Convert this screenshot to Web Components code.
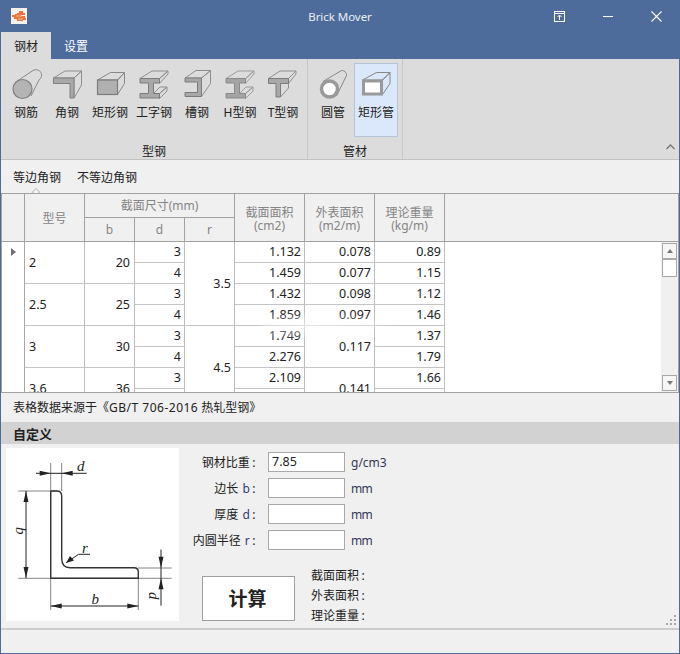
<!DOCTYPE html>
<html lang="zh"><head><meta charset="utf-8"><title>Brick Mover</title>
<style>
html,body{margin:0;padding:0;height:654px;width:680px;overflow:hidden}
body{font:12px "Noto Sans","Noto Sans CJK SC",sans-serif;color:#222}
bm-item svg{display:block}
bm-note span{letter-spacing:.5px}
</style></head><body>
<bm-app>
  <bm-titlebar slot="top" title-text="Brick Mover"></bm-titlebar>
  <bm-tabs slot="top"></bm-tabs>
  <bm-ribbon slot="top">
    <bm-group w="307" pad="4" label="型钢">
      <bm-item w="42" label="钢筋"><svg width="42" height="36" viewBox="5 66 42 36"><path d="M16.5 81.5 33 70.5a4.5 4.5 0 0 1 6 9.500L31 96" fill="#dcdcdc" stroke="#8a8a8a"/><circle cx="22.500" cy="89" r="9.500" fill="#b4b4b4" stroke="#808080" stroke-width="1.200"/></svg></bm-item>
      <bm-item w="40" label="角钢"><svg width="40" height="36" viewBox="47 66 40 36"><path d="M53.500 78 65 71h16.500L74 78zM74 78l7.500-7V85L74 98z" fill="#dcdcdc" stroke="#8f8f8f"/><path d="M53.500 78H74V98H70V83.500H53.500z" fill="#a8a8a8" stroke="#808080"/></svg></bm-item>
      <bm-item w="46" label="矩形钢"><svg width="46" height="36" viewBox="87 66 46 36"><path d="M97.500 80 110.500 72.500H124.500L117.500 80zM117.500 80l7-7.500V83.500L117.500 94.500z" fill="#dcdcdc" stroke="#888"/><rect x="97.500" y="80" width="20" height="14.500" fill="#b0b0b0" stroke="#7c7c7c" stroke-width="1.200"/></svg></bm-item>
      <bm-item w="42" label="工字钢"><svg width="42" height="36" viewBox="133 66 42 36"><path d="M140 78.500 152 71H168L159.500 78.500zM159.500 78.500 168 71V74L159.500 83.500zM153.500 93.500 160 87H167L159.500 93.500zM159.500 93.500 167 87V91L159.500 98.500z" fill="#dcdcdc" stroke="#8f8f8f"/><path d="M140 78.500H159.500V83H153.500V93.500H159.500V98H140V93.500H148.500V83H140z" fill="#a8a8a8" stroke="#7c7c7c"/></svg></bm-item>
      <bm-item w="44" label="槽钢"><svg width="44" height="36" viewBox="175 66 44 36"><path d="M185 78 196 70.500H210.500L201.500 78zM201.500 78 210.500 70.500V83.500L201.500 96.500z" fill="#dcdcdc" stroke="#8f8f8f"/><path d="M185 78H201.500V96.500H185V92.500H197.500V82H185z" fill="#a8a8a8" stroke="#7c7c7c"/></svg></bm-item>
      <bm-item w="42" label="H型钢"><svg width="42" height="36" viewBox="219 66 42 36"><path d="M226 78.500 238 71H254L245.500 78.500zM245.500 78.500 254 71V74L245.500 83.500zM239.500 93.500 246 87H253L245.500 93.500zM245.500 93.500 253 87V91L245.500 98.500z" fill="#dcdcdc" stroke="#9c9c9c"/><path d="M226 78.500H245.500V83H239.500V93.500H245.500V98H226V93.500H234.500V83H226z" fill="#a4a4a4" stroke="#8a8a8a"/></svg></bm-item>
      <bm-item w="44" label="T型钢"><svg width="44" height="36" viewBox="261 66 44 36"><path d="M268.500 78.500 280 71H296L288.500 78.500zM288.500 78.500 296 71V74L288.500 83.500zM280.500 83.500H288.500V88L280.500 97z" fill="#dcdcdc" stroke="#8f8f8f"/><path d="M268.500 78.500H288.500V83.500H280.500V97H276V83.500H268.500z" fill="#a8a8a8" stroke="#7c7c7c"/></svg></bm-item>
    </bm-group>
    <bm-group w="95" pad="5" gap="1" label="管材">
      <bm-item w="40" label="圆管"><svg width="40" height="36" viewBox="313 66 40 36"><path d="M323 81.500 341.500 70.500a4.500 4.500 0 0 1 5 5L336.500 96" fill="#dcdcdc" stroke="#8a8a8a"/><circle cx="329.500" cy="89" r="8" fill="#fff" stroke="#999" stroke-width="3.500"/></svg></bm-item>
      <bm-item w="44" active label="矩形管"><svg width="44" height="36" viewBox="354 66 44 36"><path d="M362.500 80 376.500 72.500H390L382.500 80zM382.500 80 390 72.500V83.500L382.500 94.500z" fill="none" stroke="#888"/><rect x="363.500" y="81" width="18" height="13" fill="#fff" stroke="#999" stroke-width="3"/></svg></bm-item>
    </bm-group>
  </bm-ribbon>
  <bm-subtabs slot="top"></bm-subtabs>
  <bm-grid slot="top"></bm-grid>
  <bm-note slot="top">表格数据来源于《<span>GB/T 706-2016</span> 热轧型钢》</bm-note>
  <bm-section slot="top">自定义</bm-section>
  <bm-custom slot="top"><bm-diagram></bm-diagram></bm-custom>
  <bm-status slot="top"></bm-status>
</bm-app>
<script>
function def(name, html, extra){
  class C extends HTMLElement{
    constructor(){super();this.attachShadow({mode:'open'}).innerHTML=typeof html==='function'?html(this):html;}
    connectedCallback(){extra&&extra(this);}
  }
  customElements.define(name,C);
}
def('bm-app',`<style>:host{display:flex;flex-direction:column;box-sizing:border-box;width:680px;height:654px;background:#f0f0f0;border:solid #4d6c9b;border-width:0 1px 1px 1px}::slotted(*){flex:none}</style><slot name="top"></slot>`);
def('bm-titlebar',`<style>
:host{display:flex;align-items:center;height:32px;margin:0 -1px;background:#4d6c9b;color:#e9eef6;font-size:11.500px;position:relative}
.logo{margin-left:11px;display:block}
.t{position:absolute;left:0;right:0;text-align:center;top:8px;line-height:17px;letter-spacing:-.05px}
.sp{flex:1}
.c{display:block}
</style>
<svg class="logo" width="16" height="16" viewBox="0 0 16 16"><rect width="16" height="16" fill="#f6f1ec"/><path d="M8 3h4v2h2v2H10v1h4v2h1v2H12v1H6v-2H3V9H1V7h3V6h2V5h2z" fill="#f0743a"/><path d="M5 8h6M7 11h5" stroke="#f8b48f"/></svg>
<div class="t">Brick Mover</div><div class="sp"></div>
<svg class="c" style="margin-right:38px" width="11" height="11" viewBox="0 0 11 11" fill="none" stroke="#fff"><rect x=".5" y=".5" width="10" height="10"/><path d="M0 2.500H11M5.500 9V4.500M3.500 6l2-2 2 2"/></svg>
<svg class="c" style="margin-right:38px" width="10" height="11" viewBox="0 0 10 11" stroke="#fff"><path d="M0 5.500H10"/></svg>
<svg class="c" style="margin-right:18px" width="11" height="11" viewBox="0 0 11 11" stroke="#fff" stroke-width="1.100"><path d="M.5.500l10 10M10.500.500l-10 10"/></svg>`);
def('bm-tabs',`<style>
:host{display:flex;height:27px;margin:0 -1px;background:#4d6c9b;padding-left:1px;line-height:29px;font-size:12px}
.a{width:50px;padding-left:13px;box-sizing:border-box;background:#dcdcdc;color:#222}
.b{margin-left:13px;color:#fff}
</style><div class="a">钢材</div><div class="b">设置</div>`);
def('bm-ribbon',`<style>
:host{display:flex;box-sizing:border-box;height:101px;background:#dcdcdc;border-bottom:1px solid #c2c2c2;position:relative}
svg{position:absolute;left:665px;top:85px}
</style><slot></slot><svg width="9" height="6" viewBox="0 0 9 6" fill="none" stroke="#777" stroke-width="1.300"><path d="M.5 5 4.500 1l4 4"/></svg>`);
def('bm-group',h=>`<style>
:host{display:flex;flex-direction:column;box-sizing:border-box;height:100px;border-right:1px solid #c6c6c6;width:${h.getAttribute('w')}px;padding-top:4px}
.r{display:flex;height:74px;padding-left:${h.getAttribute('pad')}px;gap:${h.getAttribute('gap')||0}px}
.l{height:16px;margin-top:7px;line-height:16px;text-align:center;color:#222}
</style><div class="r"><slot></slot></div><div class="l">${h.getAttribute('label')}</div>`);
def('bm-item',h=>`<style>
:host{display:block;box-sizing:border-box;height:74px;width:${h.getAttribute('w')}px;padding-top:3px;text-align:center;color:#222;${h.hasAttribute('active')?'background:#dbe7fb;box-shadow:inset 0 0 0 1px #b5c5d9;':''}}
.l{margin-top:3px;line-height:16px;white-space:nowrap}
</style><slot></slot><div class="l">${h.getAttribute('label')}</div>`);
def('bm-subtabs',`<style>
:host{display:flex;height:33px;padding-left:12px;gap:16px;line-height:36px;background:#f0f0f0;position:relative;color:#222}
i{position:absolute;left:31px;bottom:0;width:9px;height:5px;overflow:hidden}
i::after{content:"";position:absolute;left:1px;top:1px;width:6px;height:6px;background:#f4f4f4;border:1px solid #c4c4c4;box-sizing:border-box;transform:rotate(45deg)}
</style><span>等边角钢</span><span>不等边角钢</span><i></i>`);
const cols='23px 60px 50px 50px 50px 70px 70px 70px';
const data=[
 ['2','20',['3','4'],['1.132','1.459'],['0.078','0.077'],['0.89','1.15']],
 ['2.5','25',['3','4'],['1.432','1.859'],['0.098','0.097'],['1.12','1.46']],
 ['3','30',['3','4'],['1.749','2.276'],['0.117'],['1.37','1.79']],
 ['3.6','36',['3',''],['2.109',''],['0.141'],['1.66','']]
];
function bodyCells(){
  let s='<div class="c rh" style="grid-area:1/1/9/2"><i></i></div>';
  data.forEach((d,i)=>{
    const r=i*2+1;
    s+=`<div class="c l" style="grid-area:${r}/2/${r+2}/3">${d[0]}</div><div class="c n p4" style="grid-area:${r}/3/${r+2}/4">${d[1]}</div>`;
    d[2].forEach((v,j)=>s+=`<div class="c n" style="grid-area:${r+j}/4/${r+j+1}/5">${v}</div>`);
    [[3,6],[4,7],[5,8]].forEach(([k,col])=>{
      if(d[k].length==1) s+=`<div class="c n" style="grid-area:${r}/${col}/${r+2}/${col+1}">${d[k][0]}</div>`;
      else d[k].forEach((v,j)=>s+=`<div class="c n" style="grid-area:${r+j}/${col}/${r+j+1}/${col+1}">${v}</div>`);
    });
  });
  s+='<div class="c n" style="grid-area:1/5/5/6">3.5</div><div class="c n" style="grid-area:5/5/9/6">4.5</div>';
  return s;
}
def('bm-grid',`<style>
:host{display:flex;flex-direction:column;box-sizing:border-box;height:200px;border:1px solid #a2a2a2;background:#fff;margin-left:0;color:#222}
.h{display:grid;grid-template-columns:${cols} 1fr;grid-template-rows:24px 24px;background:#f0f0f0;color:#858585;flex:none}
.h div{box-sizing:border-box;border-right:1px solid #a2a2a2;border-bottom:1px solid #a2a2a2;display:flex;align-items:center;justify-content:center;text-align:center;line-height:14px}
.h .tall{padding-top:2px}
.h .two{padding-top:3px;flex-direction:column;font-size:12px}
.h .two b{display:block;font-weight:400;height:13px;line-height:13px}
.h .e{border-right:0}
.b{flex:1;display:flex;min-height:0;position:relative;overflow:hidden}
.t{flex:none;display:grid;grid-template-columns:${cols};grid-auto-rows:21px;height:168px;font-size:12.500px}
.c{box-sizing:border-box;border-right:1px solid #bdbdbd;border-bottom:1px solid #c4c4c4;display:flex;align-items:center;padding:0 3px 1px 4px;background:#fff}
.n{justify-content:flex-end}.p4{padding-right:4px}
.rh{align-items:flex-start;border-bottom:0;border-right-color:#a8a8a8;padding:0}
.rh i{display:block;margin:6px 0 0 9px;border:4px solid transparent;border-left:5px solid #707070;border-right:0}
.sp{flex:1}
.sb{flex:none;width:17px;margin-right:0;background:#f0f0f0;display:flex;flex-direction:column;padding:1px 0 1px 1px;box-sizing:border-box}
.sb div{box-sizing:border-box;width:15px;background:#fff;border:1px solid #a8a8a8;display:flex;align-items:center;justify-content:center}
.up{height:16px;background:#f6f6f6!important}.th{height:18px;margin-top:0}.gap{flex:1;border:0!important;background:none!important}.dn{height:16px;background:#f6f6f6!important}
.sb i{border:3.500px solid transparent}
.up i{border-bottom:4px solid #777;border-top:0}.dn i{border-top:4px solid #777;border-bottom:0}
.fade{position:absolute;left:261px;top:70px;width:130px;height:28px;background:radial-gradient(ellipse at 40% 50%,rgba(255,255,255,.55),rgba(255,255,255,.3) 45%,rgba(255,255,255,0) 72%);pointer-events:none}
</style>
<div class="h">
<div style="grid-area:1/1/3/2"></div>
<div class="tall" style="grid-area:1/2/3/3">型号</div>
<div style="grid-area:1/3/2/6">截面尺寸(mm)</div>
<div style="grid-area:2/3">b</div><div style="grid-area:2/4">d</div><div style="grid-area:2/5">r</div>
<div class="two" style="grid-area:1/6/3/7"><b>截面面积</b><b>(cm2)</b></div>
<div class="two" style="grid-area:1/7/3/8"><b>外表面积</b><b>(m2/m)</b></div>
<div class="two" style="grid-area:1/8/3/9"><b>理论重量</b><b>(kg/m)</b></div>
<div class="e" style="grid-area:1/9/3/10"></div>
</div>
<div class="b"><div class="t">${bodyCells()}</div><div class="sp"></div>
<div class="sb"><div class="up"><i></i></div><div class="th"></div><div class="gap"></div><div class="dn"><i></i></div></div>
<div class="fade"></div></div>`);
def('bm-note',`<style>:host{display:block;height:29px;padding-left:12px;line-height:30px;background:#f0f0f0;color:#222;box-sizing:border-box}</style><slot></slot>`);
def('bm-section',`<style>:host{display:block;height:22px;padding-left:12px;line-height:24px;background:#d2d2d2;color:#222;font-weight:700;font-size:13px;box-sizing:border-box}</style><slot></slot>`);
def('bm-custom',`<style>
:host{display:flex;box-sizing:border-box;height:186px;padding:4px 0 0 5px;background:#f0f0f0;border-bottom:2px solid #cdcdcd;color:#222}
.r{flex:1;padding-top:4px}
.f{display:grid;grid-template-columns:71px 77px auto;grid-auto-rows:20px;column-gap:12px;row-gap:6px;margin-left:6px;align-items:center;justify-content:start}
.f>label{text-align:right;white-space:nowrap;grid-column:1;line-height:19px;margin-left:-10px;padding-top:1px}
.f>span{margin-left:-6px;color:#333a55;padding-top:1px}
.mm{letter-spacing:-.6px}
.in{box-sizing:border-box;height:20px;width:77px;background:#fff;border:1px solid #a8a8a8;padding-left:3px;line-height:18px;font-size:12.500px}
.b{color:#333a77;margin-left:1px}
.k{padding-left:2.500px;padding-right:.5px}
.u{display:flex;margin:16px 0 0 23px}
.btn{box-sizing:border-box;width:93px;height:45px;margin-top:10px;background:#fff;border:1px solid #a0a0a0;font-size:19px;font-weight:700;display:flex;align-items:center;justify-content:center;color:#222;font-family:"Noto Sans CJK SC",sans-serif;padding:0 2px 2px 0}
.res{margin-left:16px;line-height:20px}
</style><slot></slot>
<div class="r"><div class="f">
<label>钢材比重<span class="k">:</span></label><div class="in">7.85</div><span>g/cm3</span>
<label>边长 <span class="b">b</span><span class="k">:</span></label><div class="in"></div><span class="mm">mm</span>
<label>厚度 <span class="b">d</span><span class="k">:</span></label><div class="in"></div><span class="mm">mm</span>
<label>内圆半径 <span class="b">r</span><span class="k">:</span></label><div class="in"></div><span class="mm">mm</span>
</div><div class="u"><div class="btn">计算</div><div class="res"><div>截面面积<span class="k">:</span></div><div>外表面积<span class="k">:</span></div><div>理论重量<span class="k">:</span></div></div></div></div>`);
def('bm-diagram',`<style>
:host{display:block;flex:none;width:173px;height:173px;background:#fff}
svg{display:block}
text{font:italic 15px "Liberation Serif",serif;fill:#222}
</style>
<svg width="173" height="173" viewBox="6 448 173 173" fill="none" stroke="#444">
<path d="M50.700 463V610M61.700 463V491M18.300 491H57M18.300 578.300H171.700M138 568H171.700M138.300 578V610" stroke="#666" stroke-width=".8"/>
<path d="M50.700 491V578.300H138.300V572Q138.300 567.700 134 567.700H70Q61.700 567.700 61.700 558V496Q61.700 491 56.700 491H50.700" stroke="#333" stroke-width="1.400"/>
<path d="M26 491V578M36 473.300H86.700M50.700 606H138.300M161 549.500V605.700M90 554.300H78.500L66.500 562.500" stroke="#222" stroke-width="1"/>
<g fill="#222" stroke="none">
<path d="M26 491l-2.500 11h5zM26 578l-2.500-11h5zM50.700 473.300l-11-2.500v5zM61.700 473.300l11-2.500v5zM50.700 606l11-2.500v5zM138.300 606l-11-2.500v5zM161 567.700l-2.500-11h5zM161 578.300l-2.500 11h5zM66 563l4-7 4 4.500z"/>
</g>
<text x="77" y="471" stroke="none">d</text><text x="82" y="553" stroke="none">r</text><text x="91.500" y="604" stroke="none" font-size="17">b</text>
<text x="0" y="0" stroke="none" transform="translate(15.500 527) rotate(90)">b</text>
<text x="0" y="0" stroke="none" transform="translate(149 592) rotate(90)">d</text>
</svg>`);
def('bm-status',`<style>:host{display:block;flex:1;background:#dcdcdc;position:relative}
svg{position:absolute;right:3px;bottom:5px}</style>
<svg width="10" height="10" viewBox="0 0 10 10" fill="#a8a8a8"><rect x="8" y="0" width="2" height="2"/><rect x="4" y="4" width="2" height="2"/><rect x="8" y="4" width="2" height="2"/><rect x="0" y="8" width="2" height="2"/><rect x="4" y="8" width="2" height="2"/><rect x="8" y="8" width="2" height="2"/></svg>`);
</script>
</body></html>
